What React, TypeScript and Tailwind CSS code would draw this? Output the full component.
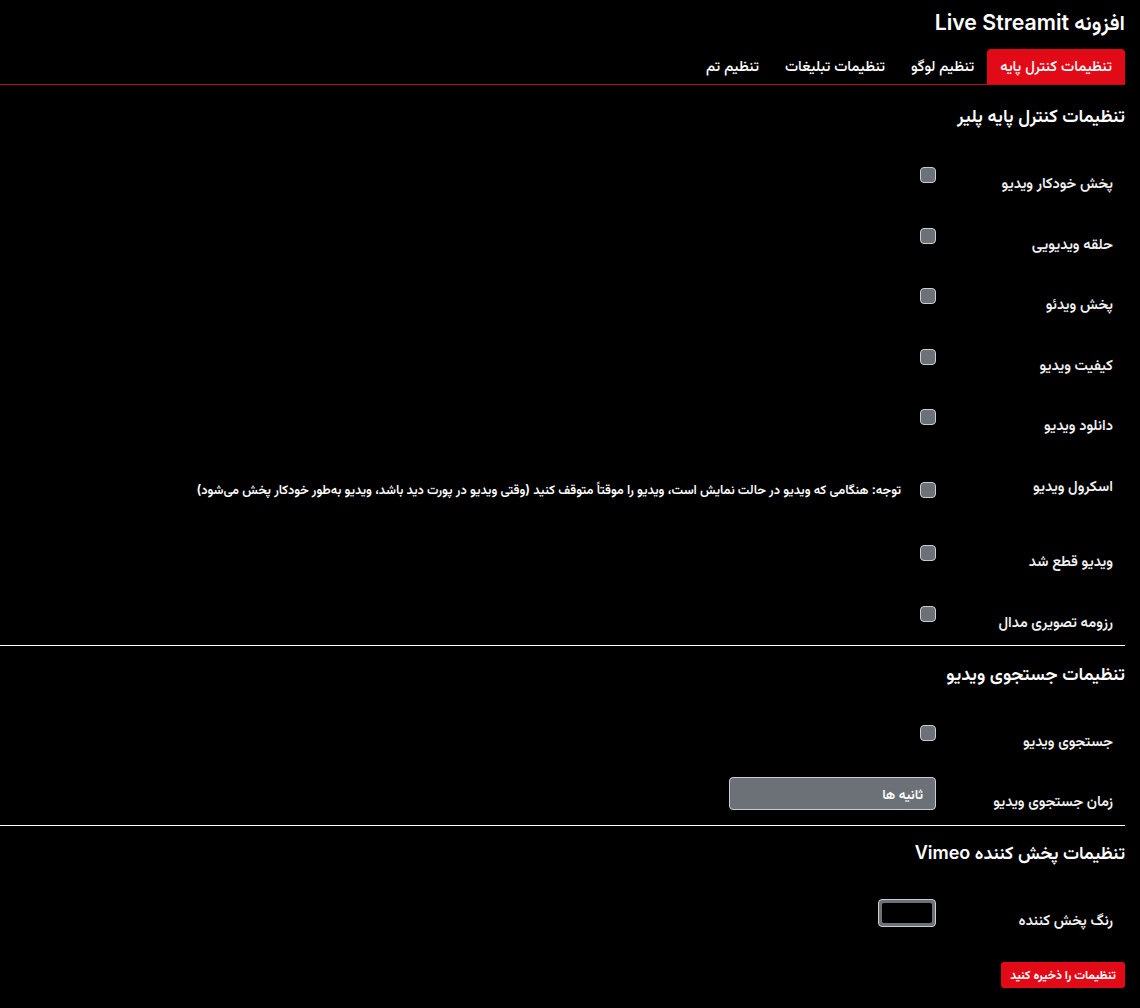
import type { ReactNode } from "react";

const FONT = 'Inter, "Vazirmatn", "Noto Sans Arabic", "DejaVu Sans", sans-serif';

type RowProps = {
  label: string;
  height: string;
  tdClass: string;
  children: ReactNode;
};

function Row({ label, height, tdClass, children }: RowProps) {
  return (
    <div className={"flex " + height}>
      <div className="w-[189px] shrink-0 pr-3 pt-[19px] text-[14.7px] leading-5 font-semibold text-[#f1f1f1]">
        {label}
      </div>
      <div className={tdClass}>{children}</div>
    </div>
  );
}

function Checkbox() {
  return (
    <input
      type="checkbox"
      className="block h-4 w-4 shrink-0 appearance-none rounded-[4px] border border-[#c9ccd0] bg-[#6c7177]"
    />
  );
}

const tabs = ["تنظیمات کنترل پایه", "تنظیم لوگو", "تنظیمات تبلیغات", "تنظیم تم"];

const basicRows = [
  "پخش خودکار ویدیو",
  "حلقه ویدیویی",
  "پخش ویدئو",
  "کیفیت ویدیو",
  "دانلود ویدیو",
];

export default function App() {
  return (
    <div dir="rtl" className="min-h-screen bg-black text-white" style={{ fontFamily: FONT }}>
      <div className="mr-[15px]">
        <h1 className="pt-2 text-[21.3px] leading-7 font-semibold">افزونه Live Streamit</h1>

        <nav className="mt-[13px] flex border-b border-[#b8101a]">
          {tabs.map((t, i) => (
            <a
              key={t}
              className={
                i === 0
                  ? "flex h-[35px] items-center rounded-t-[4px] bg-[#e30a17] px-[13px] text-[14.8px] font-medium"
                  : "flex h-[35px] items-center px-[13px] text-[14.8px] font-medium"
              }
            >
              {t}
            </a>
          ))}
        </nav>

        {/* basic controls */}
        <h2 className="pt-4 mb-[25px] text-[18.2px] leading-7 font-semibold">تنظیمات کنترل پایه پلیر</h2>
        {basicRows.map((r) => (
          <Row key={r} label={r} height="h-[60.5px]" tdClass="pt-[13px]">
            <Checkbox />
          </Row>
        ))}
        <Row label="اسکرول ویدیو" height="h-[75.5px]" tdClass="pt-[25.5px] flex items-start gap-[19px]">
          <Checkbox />
          <span className="whitespace-nowrap text-[12.8px] leading-4 font-semibold">
            توجه: هنگامی که ویدیو در حالت نمایش است، ویدیو را موقتاً متوقف کنید (وقتی ویدیو در پورت دید باشد، ویدیو به‌طور خودکار پخش می‌شود)
          </span>
        </Row>
        <Row label="ویدیو قطع شد" height="h-[60.5px]" tdClass="pt-[13px]">
          <Checkbox />
        </Row>
        <Row label="رزومه تصویری مدال" height="h-[52.5px]" tdClass="pt-[13px]">
          <Checkbox />
        </Row>
        <hr className="border-t border-white" />

        {/* seek */}
        <h2 className="pt-[13px] mb-[25px] text-[18.2px] leading-7 font-semibold">تنظیمات جستجوی ویدیو</h2>
        <Row label="جستجوی ویدیو" height="h-[60px]" tdClass="pt-[13px]">
          <Checkbox />
        </Row>
        <Row label="زمان جستجوی ویدیو" height="h-[53px]" tdClass="pt-[5px]">
          <input
            type="text"
            placeholder="ثانیه ها"
            className="block h-[33px] w-[207px] rounded-[4px] border border-[#c9ccd0] bg-[#6c7177] pr-3 text-[13.5px] font-semibold text-white placeholder:text-white outline-none"
          />
        </Row>
        <hr className="border-t border-white" />

        {/* vimeo */}
        <h2 className="pt-[13px] mb-[24px] text-[18px] leading-7 font-semibold">تنظیمات پخش کننده Vimeo</h2>
        <Row label="رنگ پخش کننده" height="h-[60px]" tdClass="pt-2">
          <div className="h-[28px] w-[58px] rounded-[4px] border border-[#c9ccd0] bg-[#6c7177] p-[3px]">
            <div className="h-full w-full rounded-[2px] bg-black" />
          </div>
        </Row>
        <button className="mt-[11px] h-[26px] w-[124px] rounded-[3px] bg-[#e30a17] text-[12px] font-bold text-white">
          تنظیمات را ذخیره کنید
        </button>
      </div>
    </div>
  );
}
